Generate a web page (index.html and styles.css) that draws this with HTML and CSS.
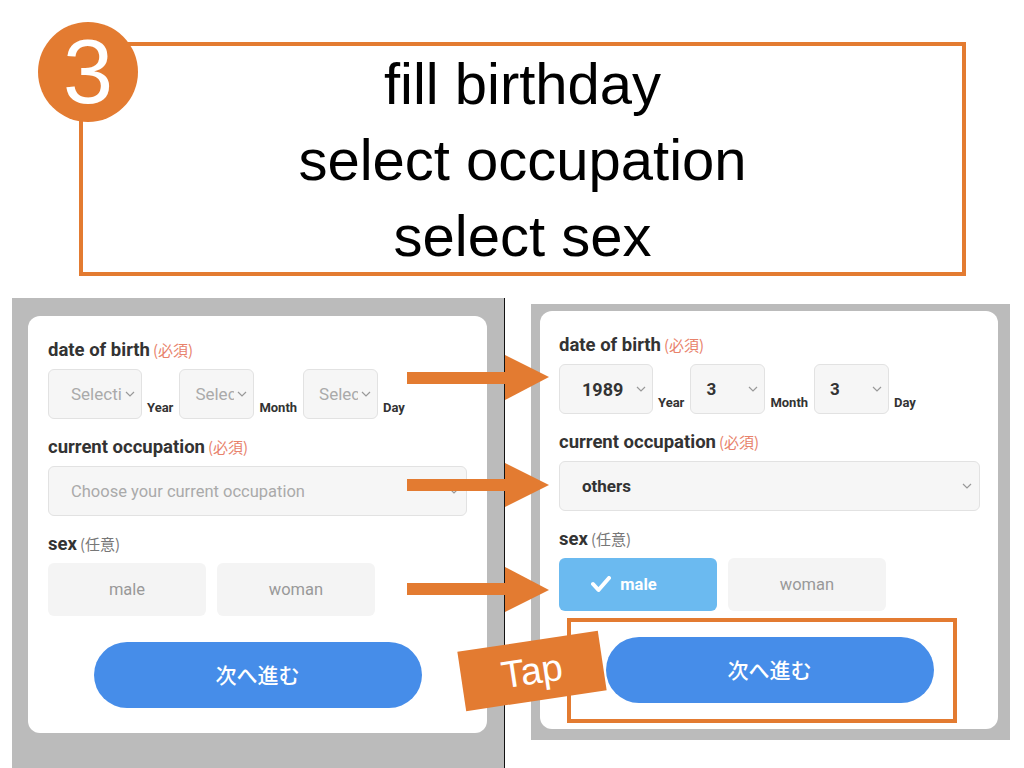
FILE: index.html
```html
<!DOCTYPE html>
<html>
<head>
  <title>Step 3 - birthday, occupation, sex</title>
  <link rel="stylesheet" href="styles.css">
</head>
<body>
  <div class="page">
    <header class="step">
      <div class="step-box">
        <p>fill birthday</p>
        <p>select occupation</p>
        <p>select sex</p>
      </div>
      <div class="step-num">3</div>
    </header>

    <div class="shots">
      <!-- before: empty form -->
      <section class="shot shot-before">
        <div class="card">
          <div class="field-label">date of birth<span class="req">(必須)</span></div>
          <div class="date-row">
            <div class="sel sel-year"><span class="sel-text placeholder">Selection</span><svg class="chev" width="10" height="6" viewBox="0 0 10 6"><polyline points="1,1 5,5 9,1"/></svg></div>
            <span class="unit">Year</span>
            <div class="sel sel-small"><span class="sel-text placeholder">Selection</span><svg class="chev" width="10" height="6" viewBox="0 0 10 6"><polyline points="1,1 5,5 9,1"/></svg></div>
            <span class="unit">Month</span>
            <div class="sel sel-small"><span class="sel-text placeholder">Selection</span><svg class="chev" width="10" height="6" viewBox="0 0 10 6"><polyline points="1,1 5,5 9,1"/></svg></div>
            <span class="unit">Day</span>
          </div>

          <div class="field-label">current occupation<span class="req">(必須)</span></div>
          <div class="sel sel-wide"><span class="sel-text placeholder small">Choose your current occupation</span><svg class="chev" width="10" height="6" viewBox="0 0 10 6"><polyline points="1,1 5,5 9,1"/></svg></div>

          <div class="field-label">sex<span class="opt">(任意)</span></div>
          <div class="sex-row">
            <div class="sex-btn">male</div>
            <div class="sex-btn">woman</div>
          </div>

          <div class="next-btn">次へ進む</div>
        </div>
      </section>

      <!-- after: filled form -->
      <section class="shot shot-after">
        <div class="card">
          <div class="field-label">date of birth<span class="req">(必須)</span></div>
          <div class="date-row">
            <div class="sel sel-year"><span class="sel-text value">1989</span><svg class="chev" width="10" height="6" viewBox="0 0 10 6"><polyline points="1,1 5,5 9,1"/></svg></div>
            <span class="unit">Year</span>
            <div class="sel sel-small"><span class="sel-text value">3</span><svg class="chev" width="10" height="6" viewBox="0 0 10 6"><polyline points="1,1 5,5 9,1"/></svg></div>
            <span class="unit">Month</span>
            <div class="sel sel-small"><span class="sel-text value">3</span><svg class="chev" width="10" height="6" viewBox="0 0 10 6"><polyline points="1,1 5,5 9,1"/></svg></div>
            <span class="unit">Day</span>
          </div>

          <div class="field-label">current occupation<span class="req">(必須)</span></div>
          <div class="sel sel-wide"><span class="sel-text value">others</span><svg class="chev" width="10" height="6" viewBox="0 0 10 6"><polyline points="1,1 5,5 9,1"/></svg></div>

          <div class="field-label">sex<span class="opt">(任意)</span></div>
          <div class="sex-row">
            <div class="sex-btn selected">
              <svg class="check" width="20" height="17" viewBox="0 0 20 17"><polyline points="2,8 7.5,14 18,2"/></svg>
              male
            </div>
            <div class="sex-btn">woman</div>
          </div>

          <div class="next-btn">次へ進む</div>
        </div>
      </section>
    </div>

    <!-- annotations -->
    <svg class="arrows" width="1024" height="768" viewBox="0 0 1024 768">
      <rect x="407" y="372" width="99" height="12"/>
      <polygon points="505,355 549,377 505,400"/>
      <rect x="407" y="479" width="99" height="12"/>
      <polygon points="505,463 549,485 505,507"/>
      <rect x="407" y="583" width="99" height="12"/>
      <polygon points="505,567 549,590 505,612"/>
    </svg>
    <div class="tap-frame"></div>
    <div class="tap-label">Tap</div>
  </div>
</body>
</html>
```

FILE: styles.css
```css
/* page */
body {
  margin: 0;
  background: #fff;
  font-family: Roboto, "Noto Sans CJK JP", sans-serif;
}

.page {
  position: relative;
  width: 1024px;
  height: 768px;
  overflow: hidden;
}

/* step header */
.step {
  position: relative;
  padding-top: 42px;
}

.step-box {
  box-sizing: border-box;
  width: 887px;
  height: 234px;
  margin-left: 79px;
  border: 4px solid #e37b31;
  font-family: "Liberation Sans", Arial, sans-serif;
  font-size: 58px;
  line-height: 76px;
  text-align: center;
  color: #000;
}

.step-box p {
  margin: 0;
}

.step-num {
  position: absolute;
  left: 38px;
  top: 22px;
  width: 100px;
  height: 100px;
  border-radius: 50%;
  background: #e37b31;
  color: #fff;
  font-family: "Liberation Sans", Arial, sans-serif;
  font-size: 90px;
  line-height: 100px;
  text-align: center;
}

/* screenshots */
.shots {
  display: flex;
  align-items: flex-start;
  margin-top: 22px;
  padding-left: 12px;
}

.shot {
  box-sizing: border-box;
  background: #bbbbbb;
}

.shot-before {
  width: 493px;
  height: 480px;
  padding: 18px 17px 0 16px;
  border-right: 1px solid #111;
}

.shot-after {
  width: 479px;
  margin-left: 26px;
  margin-top: 6px;
  padding: 7px 12px 11px 9px;
}

.card {
  box-sizing: border-box;
  height: 417px;
  padding: 23px 20px 0 20px;
  background: #fff;
  border-radius: 12px;
}

.shot-after .card {
  height: 418px;
  padding: 23px 18px 0 19px;
}

.field-label {
  font-size: 18.5px;
  font-weight: bold;
  line-height: 22px;
  color: #333;
  margin-bottom: 8px;
}

.field-label .req,
.field-label .opt {
  font-family: "Noto Sans CJK JP", sans-serif;
  font-size: 15px;
  font-weight: normal;
  margin-left: 3px;
}

.req {
  color: #e8826b;
}

.opt {
  color: #777;
}

/* selects */
.date-row {
  display: flex;
  align-items: flex-end;
  height: 50px;
  margin-bottom: 17px;
}

.sel {
  box-sizing: border-box;
  display: flex;
  align-items: center;
  height: 50px;
  padding: 0 6px 0 22px;
  background: #f6f6f6;
  border: 1px solid #e2e2e2;
  border-radius: 6px;
}

.sel-year {
  width: 94px;
}

.sel-small {
  width: 75px;
  padding-left: 15px;
}

.sel-wide {
  margin-bottom: 17px;
  padding-right: 7px;
}

.sel-text {
  flex: 1;
  overflow: hidden;
  white-space: nowrap;
}

.placeholder {
  font-size: 17px;
  color: #aaa;
}

.placeholder.small {
  font-size: 16.5px;
}

.value {
  font-size: 17px;
  font-weight: bold;
  color: #333;
}

.sel-year .value {
  font-size: 18px;
}

.chev {
  flex-shrink: 0;
  margin-left: 3px;
}

.chev polyline {
  fill: none;
  stroke: #999;
  stroke-width: 1.2;
}

.unit {
  font-size: 13px;
  font-weight: bold;
  color: #333;
  line-height: 15px;
  margin: 0 6px 0 5px;
  padding-bottom: 4px;
}

/* sex buttons */
.sex-row {
  display: flex;
  gap: 11px;
}

.sex-btn {
  display: flex;
  align-items: center;
  justify-content: center;
  gap: 9px;
  width: 158px;
  height: 53px;
  background: #f4f4f4;
  border-radius: 6px;
  font-size: 16.5px;
  color: #999;
}

.sex-btn.selected {
  box-sizing: border-box;
  padding-right: 28px;
  background: #6bbaf0;
  color: #fff;
  font-weight: bold;
  font-size: 16.5px;
}

.check polyline {
  fill: none;
  stroke: #fff;
  stroke-width: 4;
  stroke-linecap: round;
  stroke-linejoin: round;
}

/* next button */
.next-btn {
  width: 328px;
  height: 66px;
  margin: 26px auto 0;
  border-radius: 33px;
  background: #468de9;
  color: #fff;
  font-family: "Noto Sans CJK JP", sans-serif;
  font-size: 21px;
  font-weight: 500;
  line-height: 64px;
  text-align: center;
}

/* annotations */
.arrows {
  position: absolute;
  left: 0;
  top: 0;
}

.arrows rect,
.arrows polygon {
  fill: #e37b31;
}

.tap-frame {
  position: absolute;
  left: 567px;
  top: 618px;
  width: 390px;
  height: 105px;
  box-sizing: border-box;
  border: 4px solid #e37b31;
}

.tap-label {
  position: absolute;
  left: 461px;
  top: 641px;
  width: 142px;
  height: 60px;
  background: #e37b31;
  color: #fff;
  font-family: "Liberation Sans", Arial, sans-serif;
  font-size: 38px;
  line-height: 60px;
  text-align: center;
  transform: rotate(-8.5deg);
}
```
